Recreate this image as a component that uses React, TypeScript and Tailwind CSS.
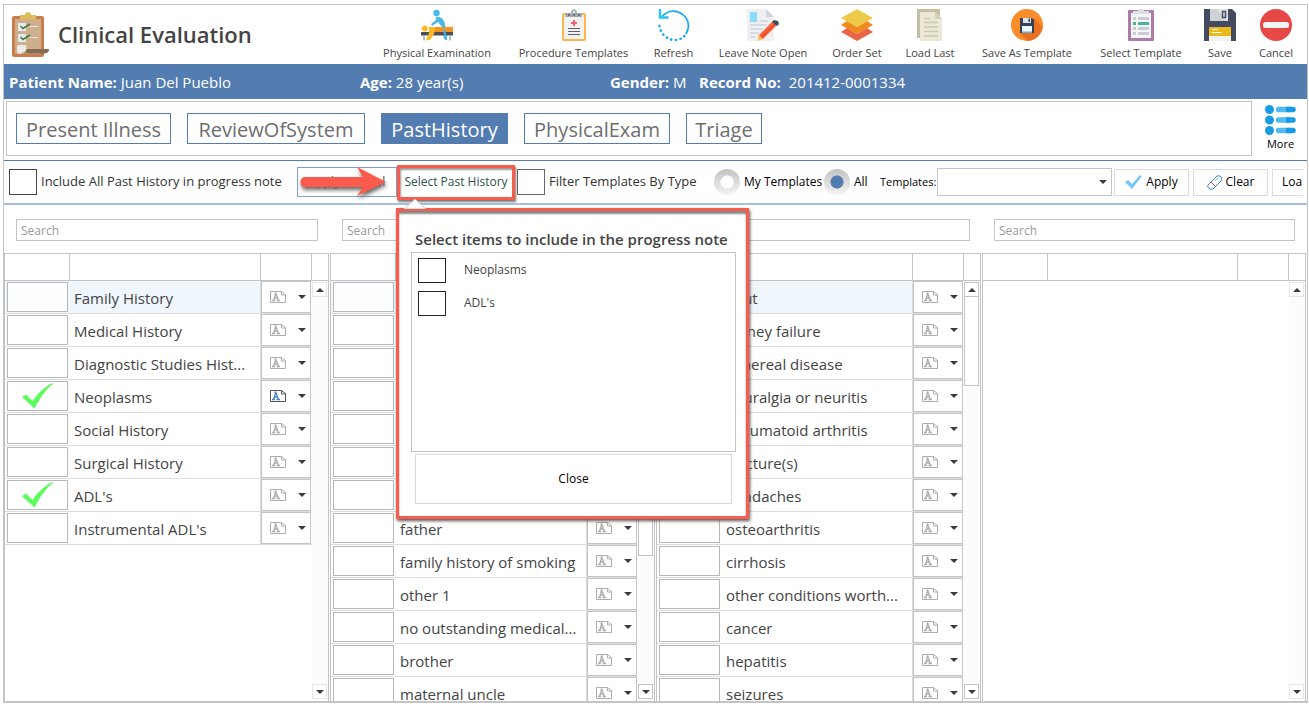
import React from 'react';

const toolbarItems = [
  { label: 'Physical Examination', width: 'w-[136px]', icon: <ExamIcon /> },
  { label: 'Procedure Templates', width: 'w-[137px]', icon: <ProcedureIcon /> },
  { label: 'Refresh', width: 'w-[63px]', icon: <RefreshIcon /> },
  { label: 'Leave Note Open', width: 'w-[116px]', icon: <NoteIcon /> },
  { label: 'Order Set', width: 'w-[72px]', icon: <OrderSetIcon /> },
  { label: 'Load Last', width: 'w-[74px]', icon: <LoadLastIcon /> },
  { label: 'Save As Template', width: 'w-[120px]', icon: <SaveAsIcon /> },
  { label: 'Select Template', width: 'w-[108px]', icon: <SelectTemplateIcon /> },
  { label: 'Save', width: 'w-[50px]', icon: <SaveIcon /> },
  { label: 'Cancel', width: 'w-[62px]', icon: <CancelIcon /> },
];

const sections = [
  { label: 'Present Illness', width: 'w-[155px]' },
  { label: 'ReviewOfSystem', width: 'w-[178px]' },
  { label: 'PastHistory', width: 'w-[127px]', active: true },
  { label: 'PhysicalExam', width: 'w-[146px]' },
  { label: 'Triage', width: 'w-[76px]' },
];

interface Row {
  name: string;
  checked?: boolean;
  noted?: boolean;
}

interface Column {
  title: string;
  rows: Row[];
  highlightFirst?: boolean;
  thumb?: string;
}

const columns: Column[] = [
  {
    title: 'History',
    highlightFirst: true,
    rows: [
      { name: 'Family History' },
      { name: 'Medical History' },
      { name: 'Diagnostic Studies Hist...' },
      { name: 'Neoplasms', checked: true, noted: true },
      { name: 'Social History' },
      { name: 'Surgical History' },
      { name: "ADL's", checked: true },
      { name: "Instrumental ADL's" },
    ],
  },
  {
    title: 'Relatives',
    highlightFirst: true,
    thumb: 'h-[259px]',
    rows: [
      { name: '' },
      { name: '' },
      { name: '' },
      { name: '' },
      { name: '' },
      { name: '' },
      { name: '' },
      { name: 'father' },
      { name: 'family history of smoking' },
      { name: 'other 1' },
      { name: 'no outstanding medical...' },
      { name: 'brother' },
      { name: 'maternal uncle' },
    ],
  },
  {
    title: 'Conditions',
    highlightFirst: true,
    thumb: 'h-[89px]',
    rows: [
      { name: 'gout' },
      { name: 'kidney failure' },
      { name: 'venereal disease' },
      { name: 'neuralgia or neuritis' },
      { name: 'rheumatoid arthritis' },
      { name: 'fracture(s)' },
      { name: 'headaches' },
      { name: 'osteoarthritis' },
      { name: 'cirrhosis' },
      { name: 'other conditions worth...' },
      { name: 'cancer' },
      { name: 'hepatitis' },
      { name: 'seizures' },
    ],
  },
  { title: 'Details', rows: [] },
];

function ClipboardLogo() {
  return (
    <svg viewBox="0 0 38 46" className="h-[46px] w-[38px] shrink-0">
      <rect x="0" y="4" width="32" height="41" rx="2" fill="#c97d4c" />
      <path d="M3 7h26v35H3z" fill="#cdb08b" />
      <path d="M8 3h5c0-4 6-4 6 0h5v4H8z" fill="#e0bd5a" />
      <path d="M6 11h8v8H6zM6 22h8v8H6z" fill="#e9e9e9" />
      <path d="M17 14.500h9M17 25.500h9" stroke="#e9e4dc" strokeWidth="1.200" />
      <path d="M8.500 14l2.500 2.500 7-4.500M8.500 25l2.500 2.500 7-4.500" fill="none" stroke="#3d7a4a" strokeWidth="1.500" />
      <path d="M5 34c3-2 6-1.500 9-.5l1 4-6 4c-3 1-4-1-4-3z" fill="#ececec" />
      <path d="M14 37h23c0 4-3 4.500-6 4.500H11c3-.5 4-2 3-4.500z" fill="#846b53" />
    </svg>
  );
}

function ExamIcon() {
  return (
    <svg viewBox="0 0 32 32" className="h-8 w-8">
      <circle cx="15.500" cy="4" r="3.200" fill="#48b9e8" />
      <path d="M15 8c4-1 8 2 9 7l2 13v2h-3l-2-12-4-5-6 4-1-2 5-4z" fill="#48b9e8" />
      <rect x="0" y="23" width="32" height="3.500" fill="#4c5059" />
      <path d="M3 26.500v5M29 26.500v5" stroke="#9fa9b8" strokeWidth="1.500" />
      <path d="M10 18h22v5H10z" fill="#f7941d" />
      <circle cx="3.800" cy="19.500" r="3" fill="#fdb92a" />
      <path d="M8 18h6l-1 7-4 6H5l3-7z" fill="#fdb92a" />
      <path d="M22 20l2 11h2l-2-11z" fill="#48b9e8" />
    </svg>
  );
}

function ProcedureIcon() {
  return (
    <svg viewBox="0 0 32 32" className="h-8 w-8">
      <rect x="4" y="4" width="24" height="28" rx="2" fill="#fbb64c" />
      <path d="M6 6h20v24H6z" fill="#f3f1ee" />
      <path d="M7 4h6c0-5 6-5 6 0h5v4H7z" fill="#a6aab1" />
      <circle cx="16" cy="3" r="1" fill="#fff" />
      <path d="M10 6h2M15 6h2M20 6h2" stroke="#5b6068" strokeWidth="1.500" />
      <path d="M16 11v6M13 14h6" stroke="#f5636d" strokeWidth="2" />
      <path d="M10 19.500h12M10 22.500h12M10 25.500h12" stroke="#596067" strokeWidth="1.200" />
    </svg>
  );
}

function RefreshIcon() {
  return (
    <svg viewBox="0 0 32 32" className="h-8 w-8" fill="none">
      <path d="M4 7.500C13-3 30 3 30.500 17c0 3-1 5-2.500 8" stroke="#18a8f5" strokeWidth="1.800" />
      <path d="M2 0v8.500h8.500" stroke="#28c4f8" strokeWidth="2.400" />
      <path d="M1.500 17c1 8 8 14 15 14 5 0 9-2 11.500-6" stroke="#18a8f5" strokeWidth="2.600" strokeDasharray="0.100 4.600" strokeLinecap="round" />
    </svg>
  );
}

function NoteIcon() {
  return (
    <svg viewBox="0 0 32 32" className="h-8 w-8">
      <path d="M0 0h19l8 8v24H0z" fill="#f0f0f2" />
      <path d="M19 0v8h8z" fill="#cfd6e2" />
      <rect x="3" y="3" width="7" height="10" fill="#8adcff" />
      <path d="M13 12h8M3 16h17M3 20h13M3 24h9M3 28h5" stroke="#cdd3de" strokeWidth="1.300" />
      <path d="M12 26L26 12l4 4-14 14-5 1z" fill="#fb6238" />
      <path d="M14 29l14-14" stroke="#e04a32" strokeWidth="1.500" />
      <path d="M12 26l4 4-6 2z" fill="#ffc35a" />
      <path d="M25 13l2-2 4 1 1 3-2 2z" fill="#37505c" />
    </svg>
  );
}

function OrderSetIcon() {
  return (
    <svg viewBox="0 0 32 32" className="h-8 w-8">
      <path d="M0 23l6-4 10 6 10-6 6 4-16 9z" fill="#e9654a" />
      <path d="M0 16l6-4 10 6 10-6 6 4-16 9z" fill="#f08a1e" />
      <path d="M0 9l16-9 16 9-16 9z" fill="#edcb49" />
    </svg>
  );
}

function LoadLastIcon() {
  return (
    <svg viewBox="0 0 32 32" className="h-8 w-8">
      <path d="M3 0h23v29H3z" fill="#c3bfa4" />
      <path d="M6 3h15l7 7v22H6z" fill="#ebe8d6" />
      <path d="M21 3v7h7z" fill="#d5d1b8" />
      <path d="M10 9.500h6M10 13.500h14M10 18h14M10 22.500h14M10 27h14" stroke="#cdc9b0" strokeWidth="1.300" />
    </svg>
  );
}

function SaveAsIcon() {
  return (
    <svg viewBox="0 0 32 32" className="h-8 w-8">
      <circle cx="16" cy="16" r="16" fill="#fb8c2b" />
      <path d="M23 9l8.500 9A16 16 0 0 1 17 32l-8-8z" fill="#ec6f22" />
      <path d="M9 9h12l2 2v13H9z" fill="#324158" />
      <path d="M12 9h8v5h-8z" fill="#dfe5ea" />
      <path d="M17.500 9.500h1.500v3.500h-1.500z" fill="#324158" />
      <path d="M11 17h10v7H11z" fill="#f2f5f7" />
      <path d="M11 22.500h10V24H11z" fill="#55b9d8" />
    </svg>
  );
}

function SelectTemplateIcon() {
  return (
    <svg viewBox="0 0 32 32" className="h-8 w-8">
      <rect x="3" y="1" width="26" height="31" rx="1" fill="#ad7ba8" />
      <path d="M6 4h20v25H6z" fill="#f5f6f8" />
      <path d="M8 2h5c0-3 6-3 6 0h5v3H8z" fill="#d9e0e6" />
      <path d="M8 9.500h3M8 19.500h3M8 24.500h3" stroke="#c9ccd0" strokeWidth="3" />
      <path d="M13 9.500h11M13 19.500h11M13 24.500h11" stroke="#c9ccd0" strokeWidth="3" />
      <path d="M8 14.500h3M13 14.500h11" stroke="#4bb3a0" strokeWidth="3" />
    </svg>
  );
}

function SaveIcon() {
  return (
    <svg viewBox="0 0 32 32" className="h-8 w-8">
      <path d="M0 0h28l4 4v28H0z" fill="#444b60" />
      <path d="M6 0h18v12H6z" fill="#dfe3e5" />
      <path d="M6 0h7l9 12H6z" fill="#cdd2d5" />
      <path d="M18.500 2.500h3v6h-3z" fill="#dfe3e5" stroke="#444b60" strokeWidth="1.500" />
      <path d="M5 18h22v9H5z" fill="#ecb91c" />
      <path d="M5 27h22v5H5z" fill="#f1f2f2" />
      <path d="M8 20.500h6M8 23.500h8M16.500 23.500h1.500" stroke="#fff" strokeWidth="1" />
    </svg>
  );
}

function CancelIcon() {
  return (
    <svg viewBox="0 0 32 32" className="h-8 w-8">
      <circle cx="16" cy="16" r="16" fill="#e64747" />
      <rect x="3" y="13" width="26" height="6" rx="2.500" fill="#f3f4f5" />
    </svg>
  );
}

function MoreIcon() {
  return (
    <svg viewBox="0 0 31 30" className="h-[30px] w-[31px]">
      {[4.5, 15, 25.5].map((y) => (
        <g key={y}>
          <circle cx="4.500" cy={y} r="4.500" fill="#189ce4" />
          <path d={`M13.500 ${y}h8`} stroke="#50baee" strokeWidth="5.500" strokeLinecap="round" />
          <path d={`M21 ${y}h4`} stroke="#189ce4" strokeWidth="5.500" />
          <path d={`M24 ${y}h4`} stroke="#189ce4" strokeWidth="5.500" strokeLinecap="round" />
        </g>
      ))}
    </svg>
  );
}

function Caret({ up }: { up?: boolean }) {
  return (
    <svg viewBox="0 0 8 4" className="h-1 w-2 shrink-0">
      <path d={up ? 'M0 4h8L4 0z' : 'M0 0h8L4 4z'} fill="#3c3c3c" />
    </svg>
  );
}

function NoteFlag({ active }: { active?: boolean }) {
  const outline = active ? '#555' : '#adadad';
  return (
    <svg viewBox="0 0 16 12" className="h-3 w-4 shrink-0" fill="none">
      <path d="M.5.500H11.500L15.500 3.500V11.500H.5z" stroke={outline} />
      <path d="M11.500.500v3.500h4" stroke={outline} />
      <path
        d="M2 9.500h3M6.500 9.500h3.500M3.500 9.500L5.800 2.500 8.500 9.500M4.500 7h3.500M4.500 2.500h2"
        stroke={active ? '#4a86c8' : '#adadad'}
        strokeWidth="1.300"
      />
    </svg>
  );
}

function ScrollBar({ thumb }: { thumb?: string }) {
  const edge = thumb ? 'border-[#c4c4c4]' : 'border-[#e6e6e6]';
  return (
    <div className="flex w-4 shrink-0 flex-col">
      <div className="h-7 shrink-0 border-y border-[#c4c4c4]" />
      <div className="flex min-h-0 flex-1 flex-col bg-[#fcfcfc] pr-px pt-px pb-[2px]">
        <button aria-label="Scroll up" className={`flex h-[15px] shrink-0 items-center justify-center border bg-white ${edge}`}>
          <Caret up />
        </button>
        <div className="min-h-0 flex-1">
          {thumb && <div className={`border border-t-0 border-[#c4c4c4] bg-white ${thumb}`} />}
        </div>
        <button aria-label="Scroll down" className={`flex h-[15px] shrink-0 items-center justify-center border bg-white ${edge}`}>
          <Caret />
        </button>
      </div>
    </div>
  );
}

function HistoryRow({ row, highlighted }: { row: Row; highlighted?: boolean }) {
  const tint = highlighted ? 'bg-[#eff6fc]' : '';
  return (
    <tr>
      <td className={`h-[33px] border-b border-[#dcdcdc] p-0 ${tint}`}>
        <div className="relative mx-[2px] flex">
          <input
            type="checkbox"
            aria-label={row.name || 'Include item'}
            defaultChecked={row.checked}
            className="h-[30px] w-[61px] appearance-none border border-[#b8b8b8] bg-white/80"
          />
          {row.checked && (
            <svg viewBox="0 0 32 26" className="pointer-events-none absolute left-[15px] top-[2px] h-[26px] w-8">
              <path d="M0 14l4-2.500 6.500 6.500C16 10 23 3 31 0v1C24 6 18 15 12.500 25.500z" fill="#5dfc5d" />
            </svg>
          )}
        </div>
      </td>
      <td className={`h-[33px] border-b border-r border-[#dcdcdc] p-0 pl-1 pt-px text-[15px] leading-5 whitespace-nowrap ${tint}`}>
        {row.name}
      </td>
      <td className="h-[33px] border-b border-[#dcdcdc] p-0">
        <button
          aria-label={`Note options ${row.name}`}
          className="flex h-8 w-[50px] items-center justify-between border border-[#c4c4c4] bg-white pl-2 pr-1"
        >
          <NoteFlag active={row.noted} />
          <Caret />
        </button>
      </td>
    </tr>
  );
}

function HistoryColumn({ column }: { column: Column }) {
  return (
    <section className="mr-px flex min-h-0 min-w-0 flex-col">
      <input
        type="text"
        placeholder="Search"
        aria-label={`Search ${column.title}`}
        className="ml-3 mr-[11px] mb-3 mt-[14px] h-[22px] shrink-0 border border-[#c4c4c4] px-1 text-[12px] placeholder:text-[#9a9a9a]"
      />
      <div className="flex min-h-0 flex-1 border-x border-[#c4c4c4]">
        <div className="min-w-0 flex-1 overflow-hidden">
          <table className="w-full table-fixed border-separate border-spacing-0">
            <thead>
              <tr>
                <th aria-label="Selected" className="h-7 w-[65px] border-y border-r border-[#c4c4c4] p-0" />
                <th aria-label={column.title} className="h-7 border-y border-r border-[#c4c4c4] p-0" />
                <th aria-label="Note" className="h-7 w-[51px] border-y border-r border-[#c4c4c4] p-0" />
              </tr>
            </thead>
            <tbody>
              {column.rows.map((row, i) => (
                <HistoryRow key={i} row={row} highlighted={column.highlightFirst && i === 0} />
              ))}
            </tbody>
          </table>
        </div>
        <ScrollBar thumb={column.thumb} />
      </div>
    </section>
  );
}

function ProgressNotePopup() {
  return (
    <div
      role="dialog"
      aria-label="Select items to include in the progress note"
      className="absolute -left-px top-[43px] z-10 flex h-[311px] w-[353px] flex-col border-[3px] border-[#fb5b4c] bg-white pl-3 pr-[10px] pb-3 pt-[18px] shadow-[1px_2px_3px_#555,inset_0_3px_2px_#888]"
    >
      <svg viewBox="0 0 22 11" className="absolute -top-[13px] left-[5px] h-[11px] w-[22px]">
        <path d="M0 11L11 1l11 10z" fill="#fff" stroke="#c4c4c4" />
      </svg>
      <h2 className="pl-1 text-[15px] font-semibold leading-5 whitespace-nowrap text-[#444]">
        Select items to include in the progress note
      </h2>
      <div className="mt-[3px] flex flex-1 flex-col gap-2 border border-[#c4c4c4] px-[6px] py-[5px]">
        {['Neoplasms', "ADL's"].map((item) => (
          <label key={item} className="flex items-center gap-[18px] text-[12px] leading-4 text-[#444]">
            <input type="checkbox" className="h-[25px] w-7 appearance-none border border-[#222] bg-white" />
            {item}
          </label>
        ))}
      </div>
      <button className="mx-1 mt-[2px] h-[50px] shrink-0 border border-[#d9d9d9] bg-white text-[12px] text-black">
        Close
      </button>
    </div>
  );
}

function FilterBar() {
  return (
    <div className="flex h-[45px] shrink-0 items-center border-b-2 border-t border-b-[#a6c0dc] border-t-[#537cb0] pl-[5px] text-[13px] whitespace-nowrap text-[#333]">
      <label className="flex w-[288px] shrink-0 items-center gap-1">
        <input type="checkbox" className="h-[26px] w-7 appearance-none border border-[#444] bg-white" />
        Include All Past History in progress note
      </label>
      <div className="relative shrink-0">
        <button className="h-[30px] w-[100px] border border-[#7d9fce] bg-white text-center text-[12px] text-[#2f4f4f]">
          Apply Normal
        </button>
        <svg viewBox="0 0 88 34" className="pointer-events-none absolute left-[2px] top-0 h-[34px] w-[88px] drop-shadow-[1px_3px_2px_#666]">
          <path d="M6 10h58L58 0l29 15-29 14 6-9H6C0 20 0 10 6 10z" fill="#fb5b4c" />
        </svg>
      </div>
      <div className="relative mr-[2px] shrink-0">
        <button className="h-[35px] w-[118px] border-[3px] border-[#fb5b4c] bg-white text-[12px] text-[#2f4f4f] shadow-[1px_2px_2px_#777,inset_1px_2px_2px_#999]">
          Select Past History
        </button>
        <ProgressNotePopup />
      </div>
      <label className="flex w-[197px] shrink-0 items-center gap-1">
        <input type="checkbox" className="h-[26px] w-7 appearance-none border border-[#666] bg-white" />
        Filter Templates By Type
      </label>
      <label className="flex w-[110px] shrink-0 items-center gap-1 text-[12px] text-black">
        <input
          type="radio"
          name="templateScope"
          className="h-[26px] w-[26px] appearance-none rounded-full bg-[radial-gradient(circle,#fff_6px,transparent_7px),linear-gradient(#c2c2c2,#f4f4f4)]"
        />
        My Templates
      </label>
      <label className="flex w-14 shrink-0 items-center gap-1 text-[12px] text-black">
        <input
          type="radio"
          name="templateScope"
          defaultChecked
          className="h-[26px] w-[26px] appearance-none rounded-full bg-[radial-gradient(circle,#537cb0_6px,transparent_7px),linear-gradient(#c2c2c2,#f4f4f4)]"
        />
        All
      </label>
      <label htmlFor="templates" className="w-[57px] shrink-0 text-[11px] text-black">
        Templates:
      </label>
      <div className="relative flex shrink-0">
        <select id="templates" className="h-7 w-[175px] appearance-none border border-[#c4c4c4] bg-white" />
        <span className="pointer-events-none absolute inset-y-0 right-[5px] flex items-center">
          <Caret />
        </span>
      </div>
      <div className="mr-1 flex min-w-0 flex-1 gap-1 pl-[2px] text-[12px] text-black">
        <button className="flex h-[27px] w-[75px] shrink-0 items-center justify-center gap-1 border border-[#dcdcdc] bg-white">
          <svg viewBox="0 0 17 14" className="h-[14px] w-[17px]">
            <path d="M0 7l3-2 4 4 8-9 2 1L7 14z" fill="#74c8f8" />
          </svg>
          Apply
        </button>
        <button className="flex h-[27px] w-[75px] shrink-0 items-center justify-center gap-1 border border-[#dcdcdc] bg-white">
          <svg viewBox="0 0 15 15" className="h-[15px] w-[15px]" fill="none">
            <path d="M1 10L10 1q2-1 4 1t0 4L6 14q-2 1-4-.5T1 10z" stroke="#3f86c9" />
            <path d="M4 7l4 4" stroke="#e0435c" />
            <path d="M8 6l3-3" stroke="#7fb3e4" />
          </svg>
          Clear
        </button>
        <button className="h-[27px] min-w-[31px] flex-1 border border-r-0 border-[#dcdcdc] bg-white pl-[9px] text-left">
          Loa
        </button>
      </div>
    </div>
  );
}

export default function App() {
  return (
    <div
      className="h-screen bg-white py-1 pl-[3px] pr-px text-[#444]"
      style={{ fontFamily: '"Open Sans", "Noto Sans", sans-serif' }}
    >
      <main className="flex h-full flex-col overflow-hidden border border-b-2 border-[#c4c4c4]">
        <header className="flex h-[59px] shrink-0 justify-between pl-2">
          <div className="flex items-center gap-2">
            <ClipboardLogo />
            <h1 className="text-[22px] font-semibold whitespace-nowrap">Clinical Evaluation</h1>
          </div>
          <nav className="flex">
            {toolbarItems.map((item) => (
              <button
                key={item.label}
                className={`flex shrink-0 flex-col items-center gap-1 pt-1 text-[11px] leading-4 whitespace-nowrap ${item.width}`}
              >
                {item.icon}
                {item.label}
              </button>
            ))}
          </nav>
        </header>

        <div className="flex h-[35px] shrink-0 items-center bg-[#537cb0] pl-[5px] pt-px text-[15px] whitespace-nowrap text-white">
          <p className="w-[351px]"><b className="font-bold">Patient Name:</b> Juan Del Pueblo</p>
          <p className="w-[250px]"><b className="font-bold">Age:</b> 28 year(s)</p>
          <p className="w-[89px]"><b className="font-bold">Gender:</b> M</p>
          <p className="flex gap-2"><b className="font-bold">Record No:</b> 201412-0001334</p>
        </div>

        <div className="flex shrink-0 pb-1 pl-[2px] pt-[2px]">
          <nav className="flex h-[55px] flex-1 items-center gap-4 border border-[#c4c4c4] pl-[9px]">
            {sections.map((s) => (
              <button
                key={s.label}
                className={`h-[31px] border border-[#537cb0] pt-[2px] text-[20px] leading-7 whitespace-nowrap ${s.width} ${
                  s.active ? 'bg-[#537cb0] text-white' : 'bg-white text-[#6e6e6e]'
                }`}
              >
                {s.label}
              </button>
            ))}
          </nav>
          <button className="flex w-[55px] flex-col items-center gap-px pl-[2px] pt-1 text-[11px] leading-4 text-black">
            <MoreIcon />
            More
          </button>
        </div>

        <FilterBar />

        <div className="grid min-h-0 flex-1 grid-cols-[326fr_326fr_326fr_325fr] grid-rows-1">
          {columns.map((column) => (
            <HistoryColumn key={column.title} column={column} />
          ))}
        </div>
      </main>
    </div>
  );
}
